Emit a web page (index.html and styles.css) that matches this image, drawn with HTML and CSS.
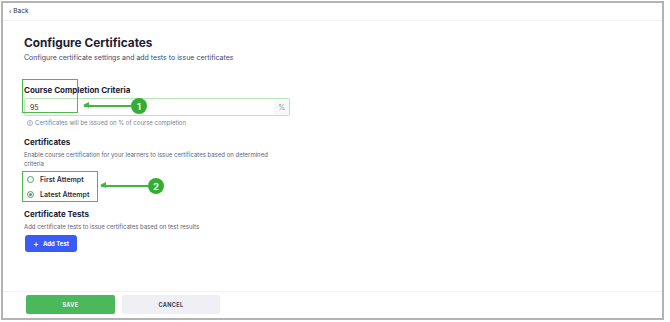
FILE: index.html
```html
<!DOCTYPE html>
<html lang="en">
<head>
    <meta charset="UTF-8">
    <title>Configure Certificates</title>
    <link rel="stylesheet" href="styles.css">
</head>
<body>
    <div class="frame">
        <div class="topbar">
            <a class="back" href="#">&lsaquo; Back</a>
        </div>

        <div class="content">
            <h1 class="title">Configure Certificates</h1>
            <p class="subtitle">Configure certificate settings and add tests to issue certificates</p>

            <div class="section criteria">
                <h3 class="label">Course Completion Criteria</h3>
                <div class="input-row">
                    <span class="input-value">95</span>
                    <span class="suffix">%</span>
                </div>
                <p class="hint">
                    <svg width="6" height="6" viewBox="0 0 12 12"><circle cx="6" cy="6" r="5" fill="none" stroke="#8a91a3" stroke-width="1.4"/><path d="M6 5.2v3.2M6 3.4v.4" stroke="#8a91a3" stroke-width="1.4" stroke-linecap="round"/></svg>
                    Certificates will be issued on % of course completion
                </p>
                <div class="mark mark-1"></div>
                <div class="callout callout-1">
                    <span class="arrow"></span>
                    <span class="badge">1</span>
                </div>
            </div>

            <div class="section certificates">
                <h3 class="heading">Certificates</h3>
                <p class="desc desc-wrap">Enable course certification for your learners to issue certificates based on determined criteria</p>
                <div class="attempts">
                    <label class="radio"><span class="dot"></span>First Attempt</label>
                    <label class="radio checked"><span class="dot"></span>Latest Attempt</label>
                </div>
                <div class="callout callout-2">
                    <span class="arrow"></span>
                    <span class="badge">2</span>
                </div>
            </div>

            <div class="section tests">
                <h3 class="heading">Certificate Tests</h3>
                <p class="desc">Add certificate tests to issue certificates based on test results</p>
                <button class="add-btn"><span class="plus">+</span>Add Test</button>
            </div>
        </div>

        <div class="footer">
            <button class="save-btn">SAVE</button>
            <button class="cancel-btn">CANCEL</button>
        </div>
    </div>
</body>
</html>
```

FILE: styles.css
```css
* {
    margin: 0;
    padding: 0;
    box-sizing: border-box;
}

body {
    font-family: 'Inter', 'Liberation Sans', sans-serif;
    background: #ffffff;
    color: #1f2438;
    padding: 1px 0 0 1px;
}

.frame {
    width: 663px;
    height: 319px;
    border: 2px solid #b3b3b3;
    display: flex;
    flex-direction: column;
    background: #fff;
}

.topbar {
    height: 18px;
    border-bottom: 1px solid #f1f2f5;
    padding: 0 0 0 6px;
    font-size: 6.5px;
    line-height: 16px;
}

.back {
    color: #2b3040;
    text-decoration: none;
}

.content {
    flex: 1;
    padding: 15px 0 0 21px;
    position: relative;
}

.title {
    font-size: 11.8px;
    font-weight: 700;
    color: #1c2033;
}

.subtitle {
    font-size: 7px;
    color: #3a4a78;
    margin-top: 3px;
}

.section {
    position: relative;
    width: 266px;
}

.criteria {
    margin-top: 23px;
}

.label {
    font-size: 8px;
    font-weight: 700;
    color: #1c2033;
}

.input-row {
    margin-top: 3px;
    height: 18px;
    border: 1px solid #b9e6b9;
    border-radius: 2px;
    display: flex;
    justify-content: space-between;
    align-items: center;
    padding: 0 0 0 5px;
    font-size: 7px;
    color: #2b3040;
}

.suffix {
    color: #8a91a3;
    height: 100%;
    display: flex;
    align-items: center;
    padding: 0 4px;
    background: #f7f8fa;
}

.hint {
    margin-top: 3px;
    font-size: 6px;
    color: #7c8395;
    display: flex;
    align-items: center;
    gap: 2px;
    padding-left: 3px;
}

.mark {
    position: absolute;
    border: 1.5px solid #4cbb4c;
}

.mark-1 {
    left: -2px;
    top: -6px;
    width: 56px;
    height: 34px;
}

.callout {
    position: absolute;
    display: flex;
    align-items: center;
}

.callout-1 {
    left: 60px;
    top: 13px;
}

.callout-2 {
    left: 77px;
    top: 41px;
}

.arrow {
    position: relative;
    width: 48px;
    height: 1.5px;
    background: #3fb63f;
}

.arrow::before {
    content: "";
    position: absolute;
    left: -1px;
    top: -3px;
    border-right: 6px solid #3fb63f;
    border-top: 3.5px solid transparent;
    border-bottom: 3.5px solid transparent;
}

.badge {
    width: 16px;
    height: 16px;
    border-radius: 50%;
    background: #34ad34;
    color: #fff;
    font-size: 9px;
    font-weight: 700;
    display: flex;
    align-items: center;
    justify-content: center;
    margin-left: -1px;
}

.certificates {
    margin-top: 11px;
}

.heading {
    font-size: 8px;
    font-weight: 700;
    color: #1c2033;
}

.desc {
    margin-top: 3px;
    font-size: 6px;
    line-height: 9px;
    color: #5d6478;
}

.desc-wrap {
    width: 262px;
}

.attempts {
    margin-top: 3px;
    width: 76px;
    height: 31px;
    border: 1.5px solid #4cbb4c;
    margin-left: -2px;
    display: flex;
    flex-direction: column;
    justify-content: center;
    gap: 6px;
    padding-left: 4px;
}

.radio {
    display: flex;
    align-items: center;
    gap: 6px;
    font-size: 7px;
    font-weight: 600;
    color: #2b3040;
}

.dot {
    width: 7px;
    height: 7px;
    border-radius: 50%;
    border: 1px solid #43a75a;
    position: relative;
}

.radio.checked .dot::after {
    content: "";
    position: absolute;
    left: 1px;
    top: 1px;
    width: 3px;
    height: 3px;
    border-radius: 50%;
    background: #43a75a;
}

.tests {
    margin-top: 7px;
}

.add-btn {
    margin-top: 4px;
    width: 52px;
    height: 17px;
    border: none;
    border-radius: 3px;
    background: #3a5cf6;
    color: #fff;
    font-family: inherit;
    font-size: 6px;
    font-weight: 700;
    display: flex;
    align-items: center;
    justify-content: center;
    gap: 4px;
    margin-left: 1px;
}

.plus {
    font-size: 9px;
    font-weight: 400;
    line-height: 1;
}

.footer {
    height: 27px;
    border-top: 1px solid #f1f2f5;
    display: flex;
    align-items: flex-start;
    gap: 7px;
    padding: 3px 0 0 23px;
}

.save-btn,
.cancel-btn {
    height: 19px;
    border: none;
    border-radius: 2px;
    font-family: inherit;
    font-size: 5.5px;
    font-weight: 700;
    letter-spacing: 0.4px;
}

.save-btn {
    width: 89px;
    background: #4cb85c;
    color: #e9f7ea;
}

.cancel-btn {
    width: 98px;
    background: #eef0f6;
    color: #3a3f52;
}
```
